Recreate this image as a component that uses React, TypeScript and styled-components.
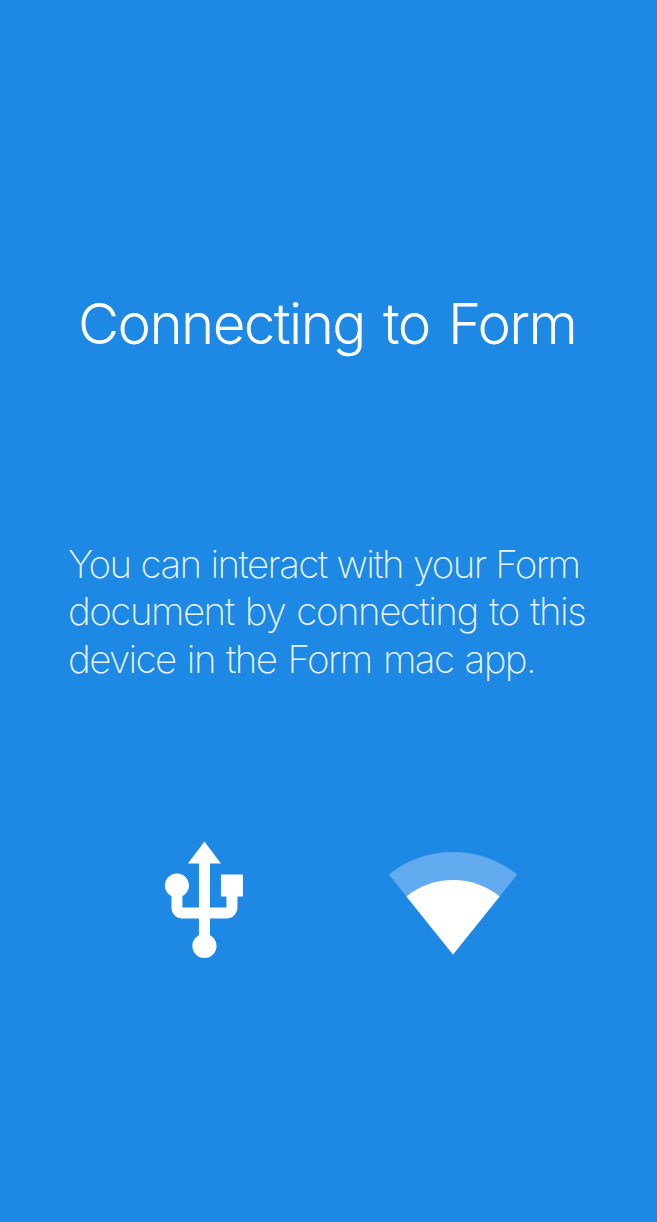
import React from 'react';
import styled, { createGlobalStyle } from 'styled-components';

const GlobalStyle = createGlobalStyle`
  body {
    margin: 0;
    background: #1e89e5;
  }
`;

const Screen = styled.main`
  display: flex;
  flex-direction: column;
  box-sizing: border-box;
  height: 1222px;
  padding-top: 289px;
  background: #1e89e5;
  color: #fff;
  font-family: Inter, 'Liberation Sans', sans-serif;
  overflow: hidden;
`;

const Title = styled.h1`
  margin: 0 0 0 78px;
  font-size: 56.5px;
  line-height: 70px;
  font-weight: 300;
  letter-spacing: -1.6px;
  word-spacing: 4px;
  white-space: nowrap;
`;

const Message = styled.p`
  height: 144px;
  margin: 181.6px 0 0 68px;
  font-size: 38.5px;
  line-height: 47.8px;
  font-weight: 200;
  color: rgba(255, 255, 255, 0.93);
`;

const Line = styled.span<{ $spacing: number; $word: number }>`
  display: block;
  white-space: nowrap;
  letter-spacing: ${(p) => p.$spacing}px;
  word-spacing: ${(p) => p.$word}px;
`;

const Connections = styled.div`
  display: flex;
  align-items: flex-start;
  margin-top: 151.4px;
  padding-left: 138px;
`;

const UsbIcon = styled.svg`
  width: 132px;
  height: 132px;
`;

const WifiIcon = styled.svg`
  width: 130px;
  height: 104px;
  margin: 15px 0 0 118px;
`;

export default function App() {
  return (
    <>
      <GlobalStyle />
      <Screen>
        <Title>Connecting to Form</Title>
        <Message>
          <Line $spacing={-1.6} $word={0.8}>You can interact with your Form </Line>
          <Line $spacing={-1.5} $word={2}>document by connecting to this </Line>
          <Line $spacing={-1.6} $word={2}>device in the Form mac app.</Line>
        </Message>
        <Connections>
          <UsbIcon viewBox="-0.08 0 24 24" fill="#fff" aria-label="USB">
            <path d="M15 7v4h1v2h-3V5h2l-3-4-3 4h2v8H8v-2.07c.7-.37 1.2-1.08 1.2-1.93 0-1.21-.99-2.2-2.2-2.2-1.21 0-2.2.99-2.2 2.2 0 .85.5 1.56 1.2 1.93V13c0 1.11.89 2 2 2h3v3.05c-.71.37-1.2 1.1-1.2 1.95 0 1.22.99 2.2 2.2 2.2 1.21 0 2.2-.98 2.2-2.2 0-.85-.49-1.58-1.2-1.95V15h3c1.11 0 2-.89 2-2v-2h1V7h-4z" />
          </UsbIcon>
          <WifiIcon viewBox="0 0 130 104" aria-label="Wi-Fi">
            <path d="M65 103.5L.8 23.5A102.6 102.6 0 0 1 129.2 23.5Z" fill="#62abef" />
            <path d="M65 103.5L18.4 45.4A74.5 74.5 0 0 1 111.6 45.4Z" fill="#fff" />
          </WifiIcon>
        </Connections>
      </Screen>
    </>
  );
}
